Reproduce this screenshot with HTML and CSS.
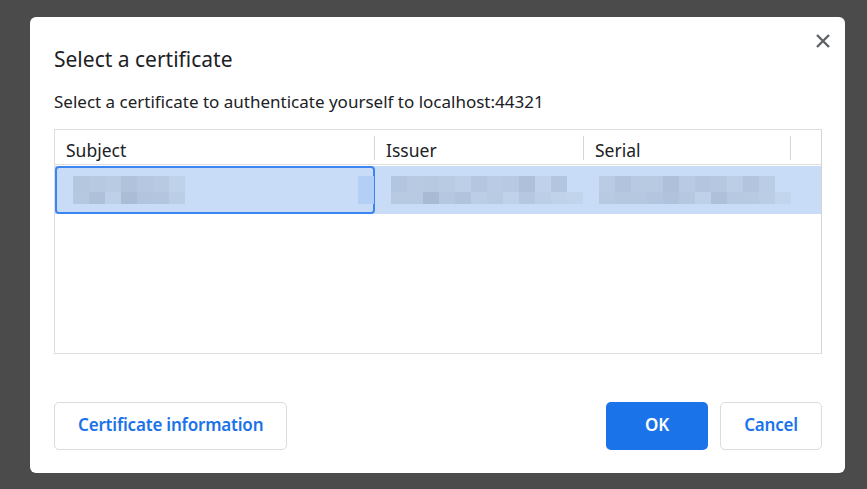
FILE: index.html
```html
<!DOCTYPE html>
<html lang="en">
<head>
  <meta charset="UTF-8" />
  <title>Select a certificate</title>
  <link rel="stylesheet" href="styles.css">
</head>
<body>

  <!-- Certificate dialog -->
  <div class="dialog">
    <div class="dialog-header">
      <h1>Select a certificate</h1>
      <button class="close-btn" aria-label="Close">
        <svg width="14" height="14" viewBox="0 0 14 14">
          <path d="M1 1 L13 13 M13 1 L1 13" stroke="#5f6368" stroke-width="2.4" fill="none"/>
        </svg>
      </button>
    </div>
    <p class="subtitle">Select a certificate to authenticate yourself to localhost:44321</p>

    <div class="cert-table">
      <div class="table-head">
        <div class="th col-subject">Subject</div>
        <div class="th col-issuer">Issuer</div>
        <div class="th col-serial">Serial</div>
        <div class="th col-rest"></div>
      </div>
      <div class="table-row selected">
        <div class="td col-subject focused">
          <div class="blur blur-subject">
            <div class="blur-top"></div>
            <div class="blur-bottom"></div>
          </div>
          <div class="blur-edge"></div>
        </div>
        <div class="td col-issuer">
          <div class="blur blur-issuer">
            <div class="blur-top"></div>
            <div class="blur-bottom"></div>
          </div>
        </div>
        <div class="td col-serial">
          <div class="blur blur-serial">
            <div class="blur-top"></div>
            <div class="blur-bottom"></div>
          </div>
        </div>
      </div>
    </div>

    <div class="dialog-footer">
      <button class="btn btn-outline">Certificate information</button>
      <div class="footer-right">
        <button class="btn btn-primary">OK</button>
        <button class="btn btn-outline">Cancel</button>
      </div>
    </div>
  </div>

</body>
</html>
```

FILE: styles.css
```css
body {
  margin: 0;
  padding: 17px 0 0 30px;
  background-color: #4b4b4b;
  font-family: "Noto Sans", "Open Sans", Arial, sans-serif;
  color: #202124;
}
.dialog {
  width: 815px;
  height: 456px;
  box-sizing: border-box;
  background: #fff;
  border-radius: 6px;
  padding: 0 23px 23px 24px;
  display: flex;
  flex-direction: column;
}
.dialog-header {
  display: flex;
  justify-content: space-between;
  align-items: flex-start;
  height: 68px;
}
.dialog-header h1 {
  margin: 28px 0 0 0;
  font-size: 21px;
  font-weight: 400;
  line-height: 28px;
}
.close-btn {
  margin: 17px -8px 0 0;
  padding: 0;
  width: 14px;
  height: 14px;
  border: none;
  background: none;
  cursor: pointer;
}
.close-btn svg {
  display: block;
}
.subtitle {
  margin: 6px 0 0 0;
  font-size: 17px;
  line-height: 22px;
}

/* table */
.cert-table {
  margin-top: 16px;
  height: 225px;
  box-sizing: border-box;
  border: 1px solid #dedede;
  border-right-color: #d4d4d4;
}
.table-head {
  display: flex;
  height: 35px;
  box-sizing: border-box;
  border-bottom: 1px solid #dedede;
}
.th {
  margin-top: 6px;
  height: 24px;
  box-sizing: border-box;
  border-right: 1px solid #d6d6d6;
  padding: 2px 0 0 11px;
  font-size: 17.5px;
  line-height: 24px;
}
.col-subject { width: 320px; }
.col-issuer { width: 209px; }
.col-serial { width: 207px; }
.col-rest { border-right: none; flex: 1; }

.table-row {
  display: flex;
  margin-top: 1px;
  height: 48px;
}
.selected {
  background: #c8dcf8;
}
.td {
  box-sizing: border-box;
  display: flex;
  align-items: center;
}
.td.col-subject {
  width: 320px;
  padding-left: 16px;
  justify-content: space-between;
}
.focused {
  border: 2px solid #3c84f0;
  border-radius: 4px;
  padding-right: 0;
}
.td.col-issuer {
  width: 209px;
  padding-left: 16px;
}
.td.col-serial {
  width: 207px;
  padding-left: 15px;
}

/* pixelated (blurred) cell values */
.blur {
  display: flex;
  flex-direction: column;
}
.blur-top {
  height: 16px;
}
.blur-bottom {
  height: 12px;
}
.blur-subject .blur-top {
  width: 112px;
  background: linear-gradient(to right,
    #b4c7df 0 16px, #b7c9e1 16px 32px, #b9cbe3 32px 48px, #b0c2dc 48px 64px,
    #b6c8e1 64px 80px, #b8cae2 80px 96px, #c0d2ea 96px 112px);
}
.blur-subject .blur-bottom {
  width: 112px;
  background: linear-gradient(to right,
    #b6c8e0 0 16px, #afc1da 16px 32px, #bed0e8 32px 48px, #abbdd6 48px 64px,
    #b3c5de 64px 80px, #b4c6df 80px 96px, #bccde6 96px 112px);
}
.blur-edge {
  width: 16px;
  height: 28px;
  background: #b4cff5;
  margin-right: -1px;
}
.blur-issuer .blur-top {
  width: 176px;
  background: linear-gradient(to right,
    #b3c6df 0 16px, #b8cae2 16px 32px, #b7c9e1 32px 48px, #b9cbe3 48px 64px,
    #bdcfe7 64px 80px, #b5c7e0 80px 96px, #bacce4 96px 112px, #b8cae3 112px 128px,
    #afc1da 128px 144px, #c0d2ea 144px 160px, #b4c6df 160px 176px);
}
.blur-issuer .blur-bottom {
  width: 192px;
  background: linear-gradient(to right,
    #b8cae2 0 16px, #b8cae2 16px 32px, #a9bbd4 32px 48px, #b6c8e0 48px 64px,
    #b2c4dd 64px 80px, #bccee6 80px 96px, #b9cbe3 96px 112px, #c0d2ea 112px 128px,
    #b6c8e1 128px 144px, #bdcfe7 144px 160px, #c0d2ea 160px 176px, #c2d4ec 176px 192px);
}
.blur-serial .blur-top {
  width: 176px;
  background: linear-gradient(to right,
    #bacce4 0 16px, #b2c4dd 16px 32px, #b8cae2 32px 48px, #b8cae2 48px 64px,
    #afc1da 64px 80px, #b9cbe3 80px 96px, #b4c6df 96px 112px, #b6c8e0 112px 128px,
    #bccee6 128px 144px, #b3c5de 144px 160px, #bbcde5 160px 176px);
}
.blur-serial .blur-bottom {
  width: 192px;
  background: linear-gradient(to right,
    #b8cae2 0 16px, #b6c8e0 16px 32px, #b6c8e0 32px 48px, #b4c6df 48px 64px,
    #b1c3dc 64px 80px, #b6c8e0 80px 96px, #bfd1e9 96px 112px, #afc1da 112px 128px,
    #b7c9e1 128px 144px, #b8cae2 144px 160px, #bbcde5 160px 176px, #c3d5ed 176px 192px);
}

/* footer buttons */
.dialog-footer {
  margin-top: auto;
  display: flex;
  justify-content: space-between;
}
.footer-right {
  display: flex;
  gap: 12px;
}
.btn {
  height: 48px;
  border-radius: 5px;
  font-family: "Noto Sans", "Open Sans", Arial, sans-serif;
  font-size: 17px;
  font-weight: 600;
  letter-spacing: -0.2px;
  line-height: 20px;
  padding-bottom: 3px;
  cursor: pointer;
}
.btn-outline {
  background: #fff;
  color: #1a73e8;
  border: 1px solid #dadce0;
  padding-left: 23px;
  padding-right: 23px;
}
.footer-right .btn {
  width: 102px;
  padding-left: 0;
  padding-right: 0;
}
.btn-primary {
  background: #1a73e8;
  color: #fff;
  border: none;
}
```
